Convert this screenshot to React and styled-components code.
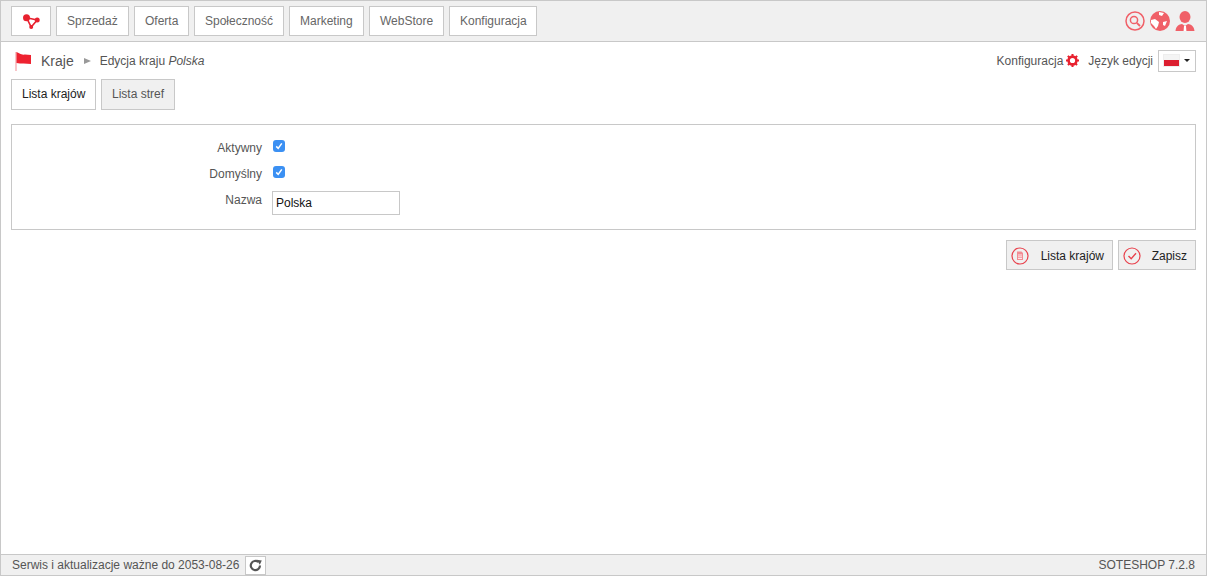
import React from "react"
import styled, { createGlobalStyle } from "styled-components"

const Global = createGlobalStyle`
  html, body {
    margin: 0;
    height: 100%;
    background: #fff;
  }
  body {
    font-family: "Liberation Sans", Arial, sans-serif;
    font-size: 12px;
    color: #555;
  }
`

const Page = styled.div`
  box-sizing: border-box;
  height: 576px;
  display: flex;
  flex-direction: column;
  border: 1px solid #c8c8c8;
`
const TopBar = styled.header`
  height: 35px;
  flex: none;
  background: #f0f0f0;
  border-bottom: 1px solid #c8c8c8;
  display: flex;
  align-items: flex-start;
  justify-content: space-between;
  padding: 5px 0 0 10px;
`
const Nav = styled.nav`
  display: flex;
  gap: 5px;
`
const NavButton = styled.a`
  box-sizing: border-box;
  height: 30px;
  padding-left: 10px;
  display: flex;
  align-items: center;
  background: #fff;
  border: 1px solid #c8c8c8;
  color: #666;
  font-size: 12px;
  width: ${(p) => p.$w}px;
`
const LogoButton = styled(NavButton)`
  padding-left: 0;
  justify-content: center;
`
const TopIcons = styled.div`
  display: flex;
  align-items: center;
  gap: 5px;
  height: 30px;
  padding-right: 11px;
`
const Content = styled.main`
  flex: 1;
  padding: 0 10px;
  display: flex;
  flex-direction: column;
`
const HeadRow = styled.div`
  height: 37px;
  display: flex;
  align-items: center;
  justify-content: space-between;
`
const Crumbs = styled.div`
  display: flex;
  align-items: center;
  padding-left: 4px;
`
const CrumbTitle = styled.span`
  font-size: 14px;
  color: #555;
  margin-left: 8px;
`
const CrumbArrow = styled.span`
  width: 0;
  height: 0;
  border-left: 7px solid #999;
  border-top: 3.5px solid transparent;
  border-bottom: 3.5px solid transparent;
  margin: 1px 9px 0 10px;
`
const CrumbText = styled.span`
  color: #555;
  em {
    font-style: italic;
  }
`
const HeadRight = styled.div`
  display: flex;
  align-items: center;
`
const ConfigLink = styled.a`
  display: flex;
  align-items: center;
  gap: 3px;
  color: #555;
  margin-right: 9px;
`
const LangLabel = styled.span`
  color: #555;
  margin-right: 5px;
`
const LangSelect = styled.div`
  box-sizing: border-box;
  width: 38px;
  height: 22px;
  border: 1px solid #c8c8c8;
  background: #fff;
  display: flex;
  align-items: center;
  padding-left: 5px;
  gap: 5px;
`
const Flag = styled.span`
  width: 15px;
  height: 11px;
  display: block;
  background: linear-gradient(#f4f4f4 0 45%, #dc1f30 45% 100%);
  box-shadow: 0 0 0 1px #eee;
`
const Caret = styled.span`
  width: 0;
  height: 0;
  border-top: 3px solid #222;
  border-left: 3px solid transparent;
  border-right: 3px solid transparent;
`
const Tabs = styled.div`
  display: flex;
  gap: 5px;
`
const Tab = styled.a`
  box-sizing: border-box;
  height: 31px;
  display: flex;
  align-items: center;
  padding: 0 0 1px 10px;
  width: ${(p) => p.$w}px;
  border: 1px solid #c8c8c8;
  background: ${(p) => (p.$active ? "#fff" : "#f0f0f0")};
  color: ${(p) => (p.$active ? "#222" : "#555")};
`
const Panel = styled.section`
  box-sizing: border-box;
  height: 106px;
  margin-top: 14px;
  border: 1px solid #c8c8c8;
  padding-top: 9px;
`
const FormRow = styled.div`
  display: grid;
  grid-template-columns: 250px 1fr;
  column-gap: 10px;
  align-items: center;
  height: 26px;
`
const NameRow = styled(FormRow)`
  align-items: flex-start;
  padding-top: 5px;
`
const Label = styled.label`
  text-align: right;
  color: #555;
  padding-top: 2px;
`
const Check = styled.span`
  width: 12px;
  height: 12px;
  border-radius: 3px;
  background: #3b90f3;
  display: flex;
  align-items: center;
  justify-content: center;
  margin-left: 1px;
  margin-top: -3px;
`
const TextInput = styled.input`
  box-sizing: border-box;
  width: 128px;
  height: 24px;
  border: 1px solid #c8c8c8;
  padding: 0 3px;
  font: 12px "Liberation Sans", Arial, sans-serif;
  color: #111;
  outline: none;
`
const Actions = styled.div`
  display: flex;
  justify-content: flex-end;
  gap: 5px;
  margin-top: 10px;
`
const ActionButton = styled.a`
  box-sizing: border-box;
  width: ${(p) => p.$w}px;
  height: 30px;
  display: flex;
  align-items: center;
  justify-content: space-between;
  padding: 1px 8px 0 4px;
  background: #f0f0f0;
  border: 1px solid #c8c8c8;
  color: #222;
`
const Footer = styled.footer`
  flex: none;
  box-sizing: border-box;
  height: 21px;
  background: #f0f0f0;
  border-top: 1px solid #c8c8c8;
  display: flex;
  align-items: center;
  justify-content: space-between;
  padding: 0 11px 0 11px;
  color: #555;
`
const FooterLeft = styled.div`
  display: flex;
  align-items: center;
  gap: 6px;
`
const RefreshButton = styled.span`
  box-sizing: border-box;
  width: 21px;
  height: 19px;
  background: #fff;
  border: 1px solid #c8c8c8;
  display: flex;
  align-items: center;
  justify-content: center;
`

const LogoIcon = () => (
  <svg width="18" height="15" viewBox="0 0 18 15">
    <path d="M4.5 3.7 L15.2 6 L9.2 13 Z" fill="none" stroke="#e8212f" strokeWidth="1.6" />
    <circle cx="4.5" cy="3.7" r="3.5" fill="#e8212f" />
    <circle cx="15.2" cy="6" r="2.5" fill="#e8212f" />
    <circle cx="9.2" cy="13" r="2" fill="#e8212f" />
  </svg>
)
const SearchIcon = () => (
  <svg width="20" height="20" viewBox="0 0 20 20">
    <circle cx="10" cy="10" r="9" fill="none" stroke="#f06068" strokeWidth="1.5" />
    <circle cx="9" cy="9" r="3.6" fill="none" stroke="#f06068" strokeWidth="1.5" />
    <path d="M11.8 11.8 L15 15" stroke="#f06068" strokeWidth="1.8" />
  </svg>
)
const GlobeIcon = () => (
  <svg width="20" height="20" viewBox="0 0 20 20">
    <circle cx="10" cy="10" r="10" fill="#f06068" />
    <path d="M1 9 L5 8 L9 11 L8 15 L6 18 L4 15 L1 12 Z M9 1 L14 2 L12 5 L9 4 Z M13 11 L17 10 L15 15 L13 14 Z" fill="#fff" />
  </svg>
)
const UserIcon = () => (
  <svg width="20" height="21" viewBox="0 0 20 21">
    <ellipse cx="10" cy="6" rx="5.5" ry="6" fill="#f06068" />
    <path d="M0.5 20 C1 15 4 13.5 7 13 L10 15 L13 13 C16 13.5 19 15 19.5 20 Z" fill="#f06068" />
    <path d="M9 15 h2 l0.4 5 h-2.8 Z" fill="#fff" />
  </svg>
)
const PageFlag = () => (
  <svg width="18" height="20" viewBox="0 0 18 20">
    <path d="M1 1 V20" stroke="#f4a0a6" strokeWidth="1.2" />
    <path d="M1.5 1 C5 3 8 4 10 3.5 L16 4 V13 C11 12.5 6 13 1.5 12 Z" fill="#ee2230" />
  </svg>
)
const GearIcon = () => (
  <svg width="13" height="13" viewBox="0 0 14 14">
    <circle cx="7" cy="7" r="4.2" fill="none" stroke="#e8212f" strokeWidth="2.8" />
    <path d="M7 0 V14 M0 7 H14 M2 2 L12 12 M12 2 L2 12" stroke="#e8212f" strokeWidth="2.2" strokeDasharray="2.4 9.2 2.4" />
  </svg>
)
const CheckMark = () => (
  <svg width="8" height="8" viewBox="0 0 8 8">
    <path d="M1.2 4.4 L3.2 6.4 L6.8 1.4" fill="none" stroke="#fff" strokeWidth="1.5" />
  </svg>
)
const DocIcon = () => (
  <svg width="18" height="18" viewBox="0 0 18 18">
    <circle cx="9" cy="9" r="8" fill="none" stroke="#e8414c" strokeWidth="1.2" />
    <path d="M6 4.5 H10.5 L12 6 V13 H6 Z" fill="#f28c93" />
    <path d="M7 8 H11 M7 9.8 H11 M7 11.5 H11" stroke="#fff" strokeWidth="0.8" />
  </svg>
)
const SaveIcon = () => (
  <svg width="18" height="18" viewBox="0 0 18 18">
    <circle cx="9" cy="9" r="8" fill="none" stroke="#e8414c" strokeWidth="1.2" />
    <path d="M5.5 9 L8.2 11.8 L13 6.2" fill="none" stroke="#e8414c" strokeWidth="1.4" />
  </svg>
)
const RefreshIcon = () => (
  <svg width="13" height="13" viewBox="0 0 13 13">
    <path d="M11 6.5 A4.6 4.6 0 1 1 9.4 3" fill="none" stroke="#555" strokeWidth="2.2" />
    <path d="M7.6 0.8 L12.8 1.4 L10.8 5.8 Z" fill="#555" />
  </svg>
)

const menu = [
  ["Sprzedaż", 73],
  ["Oferta", 55],
  ["Społeczność", 90],
  ["Marketing", 75],
  ["WebStore", 75],
  ["Konfiguracja", 88],
]

export default function App() {
  return (
    <Page>
      <Global />
      <TopBar>
        <Nav>
          <LogoButton $w={40}>
            <LogoIcon />
          </LogoButton>
          {menu.map(([name, w]) => (
            <NavButton key={name} $w={w}>
              {name}
            </NavButton>
          ))}
        </Nav>
        <TopIcons>
          <SearchIcon />
          <GlobeIcon />
          <UserIcon />
        </TopIcons>
      </TopBar>
      <Content>
        <HeadRow>
          <Crumbs>
            <PageFlag />
            <CrumbTitle>Kraje</CrumbTitle>
            <CrumbArrow />
            <CrumbText>
              Edycja kraju <em>Polska</em>
            </CrumbText>
          </Crumbs>
          <HeadRight>
            <ConfigLink>
              Konfiguracja <GearIcon />
            </ConfigLink>
            <LangLabel>Język edycji</LangLabel>
            <LangSelect>
              <Flag />
              <Caret />
            </LangSelect>
          </HeadRight>
        </HeadRow>
        <Tabs>
          <Tab $w={85} $active>
            Lista krajów
          </Tab>
          <Tab $w={74}>Lista stref</Tab>
        </Tabs>
        <Panel>
          <FormRow>
            <Label>Aktywny</Label>
            <Check>
              <CheckMark />
            </Check>
          </FormRow>
          <FormRow>
            <Label>Domyślny</Label>
            <Check>
              <CheckMark />
            </Check>
          </FormRow>
          <NameRow>
            <Label>Nazwa</Label>
            <TextInput defaultValue="Polska" />
          </NameRow>
        </Panel>
        <Actions>
          <ActionButton $w={107}>
            <DocIcon />
            Lista krajów
          </ActionButton>
          <ActionButton $w={78}>
            <SaveIcon />
            Zapisz
          </ActionButton>
        </Actions>
      </Content>
      <Footer>
        <FooterLeft>
          Serwis i aktualizacje ważne do 2053-08-26
          <RefreshButton>
            <RefreshIcon />
          </RefreshButton>
        </FooterLeft>
        <span>SOTESHOP 7.2.8</span>
      </Footer>
    </Page>
  )
}
